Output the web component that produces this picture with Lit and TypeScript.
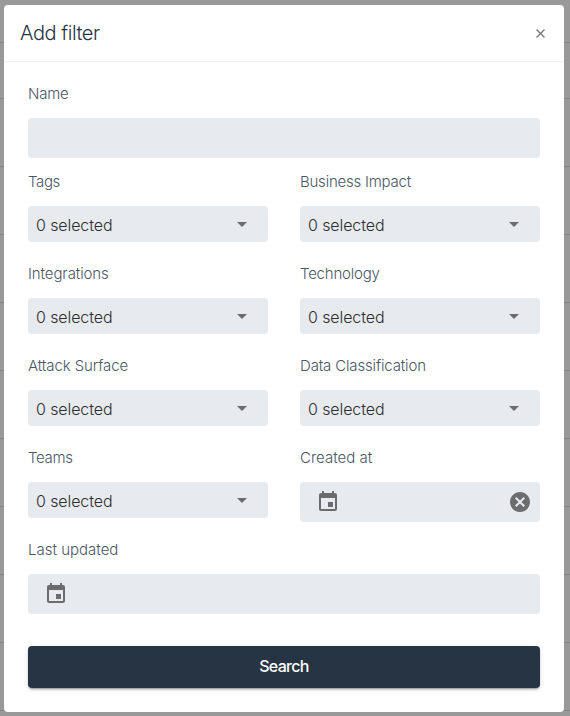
import { LitElement, html, css, svg } from "lit";
import { customElement, property } from "lit/decorators.js";

const icons = {
  drop: svg`<path d="M7 10l5 5 5-5z"/>`,
  event: svg`<path d="M17 12h-5v5h5v-5zM16 1v2H8V1H6v2H5c-1.11 0-1.99.9-1.99 2L3 19c0 1.1.89 2 2 2h14c1.1 0 2-.9 2-2V5c0-1.1-.9-2-2-2h-1V1h-2zm3 18H5V8h14v11z"/>`,
  cancel: svg`<path d="M12 2C6.47 2 2 6.47 2 12s4.47 10 10 10 10-4.47 10-10S17.53 2 12 2zm5 13.59L15.59 17 12 13.41 8.41 17 7 15.59 10.59 12 7 8.41 8.41 7 12 10.59 15.59 7 17 8.41 13.41 12 17 15.59z"/>`,
};

const icon = (name: keyof typeof icons) =>
  html`<svg class="icon" viewBox="0 0 24 24" width="24" height="24">${icons[name]}</svg>`;

@customElement("filter-field")
class FilterField extends LitElement {
  @property() label = "";
  @property() kind: "text" | "select" | "date" = "text";
  @property({ type: Number }) spacing = 0;
  @property({ type: Boolean }) clearable = false;

  static styles = css`
    :host { display: flex; flex-direction: column; gap: 12px; }
    .label { font-size: 15px; line-height: 24px; height: 24px; color: #4b5666; white-space: nowrap; }
    .box { box-sizing: border-box; display: flex; align-items: center; justify-content: space-between;
      height: 40px; border-radius: 4px; background: #e7eaef; }
    .select { height: 36px; padding: 0 14px 0 8px; }
    .date { padding: 0 8px 0 16px; }
    .value { font-size: 16px; line-height: 24px; padding-top: 1px; color: #2e2e30; letter-spacing: -0.1px; }
    .icon { display: block; fill: #6b6c6e; }
  `;

  render() {
    return html`
      <div class="label" style="letter-spacing:${this.spacing}px">${this.label}</div>
      <div class="box ${this.kind}">
        ${this.kind === "select" ? html`<span class="value">0 selected</span>${icon("drop")}` : ""}
        ${this.kind === "date" ? icon("event") : ""}
        ${this.clearable ? icon("cancel") : ""}
      </div>
    `;
  }
}

@customElement("app-root")
class AppRoot extends LitElement {
  static styles = css`
    :host { display: block; box-sizing: border-box; height: 716px; padding: 5px 6px 4px 4px; overflow: hidden;
      font-family: Inter, "Liberation Sans", sans-serif; font-weight: 300;
      background:
        linear-gradient(#868686, #868686) 0 42px / 100% 1px no-repeat,
        repeating-linear-gradient(#868686 0 1px, transparent 1px 68px) 0 98px / 100% 618px no-repeat,
        #999; }
    .dialog { box-sizing: border-box; height: 707px; border-radius: 4px; background: #fff; }
    .header { box-sizing: border-box; display: flex; align-items: center; justify-content: space-between;
      height: 57px; padding: 0 17px 0 16px; border-bottom: 1px solid #f3f3f4; }
    .title { margin: 0; font-size: 20px; line-height: 28px; font-weight: 300; color: #273444; letter-spacing: -0.45px; }
    .close { display: block; stroke: #6f7680; stroke-width: 1.3; fill: none; }
    .form { display: flex; flex-direction: column; padding: 20px 24px 0; }
    .grid { display: grid; grid-template-columns: 240px 240px; column-gap: 32px; row-gap: 20px; margin: 12px 0 16px; }
    .search { box-sizing: border-box; height: 42px; margin-top: 32px; padding: 0 0 2px; border: 0; border-radius: 4px;
      background: #273444; color: #fff; font: 500 16px/24px Inter, "Liberation Sans", sans-serif; letter-spacing: -0.7px;
      box-shadow: 0 3px 1px -2px rgba(0,0,0,.2), 0 2px 2px rgba(0,0,0,.14), 0 1px 5px rgba(0,0,0,.12); }
  `;

  render() {
    const selects: [string, number][] = [
      ["Tags", -0.4], ["Business Impact", -0.23], ["Integrations", -0.1], ["Technology", -0.22],
      ["Attack Surface", -0.1], ["Data Classification", -0.16], ["Teams", -0.35],
    ];
    return html`
      <section class="dialog">
        <header class="header">
          <h2 class="title">Add filter</h2>
          <svg class="close" width="13" height="13" viewBox="0 0 13 13"><path d="M2.5 2.5l8 8M10.5 2.5l-8 8"/></svg>
        </header>
        <div class="form">
          <filter-field label="Name" spacing="-0.25"></filter-field>
          <div class="grid">
            ${selects.map(([label, spacing]) => html`<filter-field kind="select" .label=${label} .spacing=${spacing}></filter-field>`)}
            <filter-field kind="date" label="Created at" clearable></filter-field>
          </div>
          <filter-field kind="date" label="Last updated"></filter-field>
          <button class="search">Search</button>
        </div>
      </section>
    `;
  }
}
